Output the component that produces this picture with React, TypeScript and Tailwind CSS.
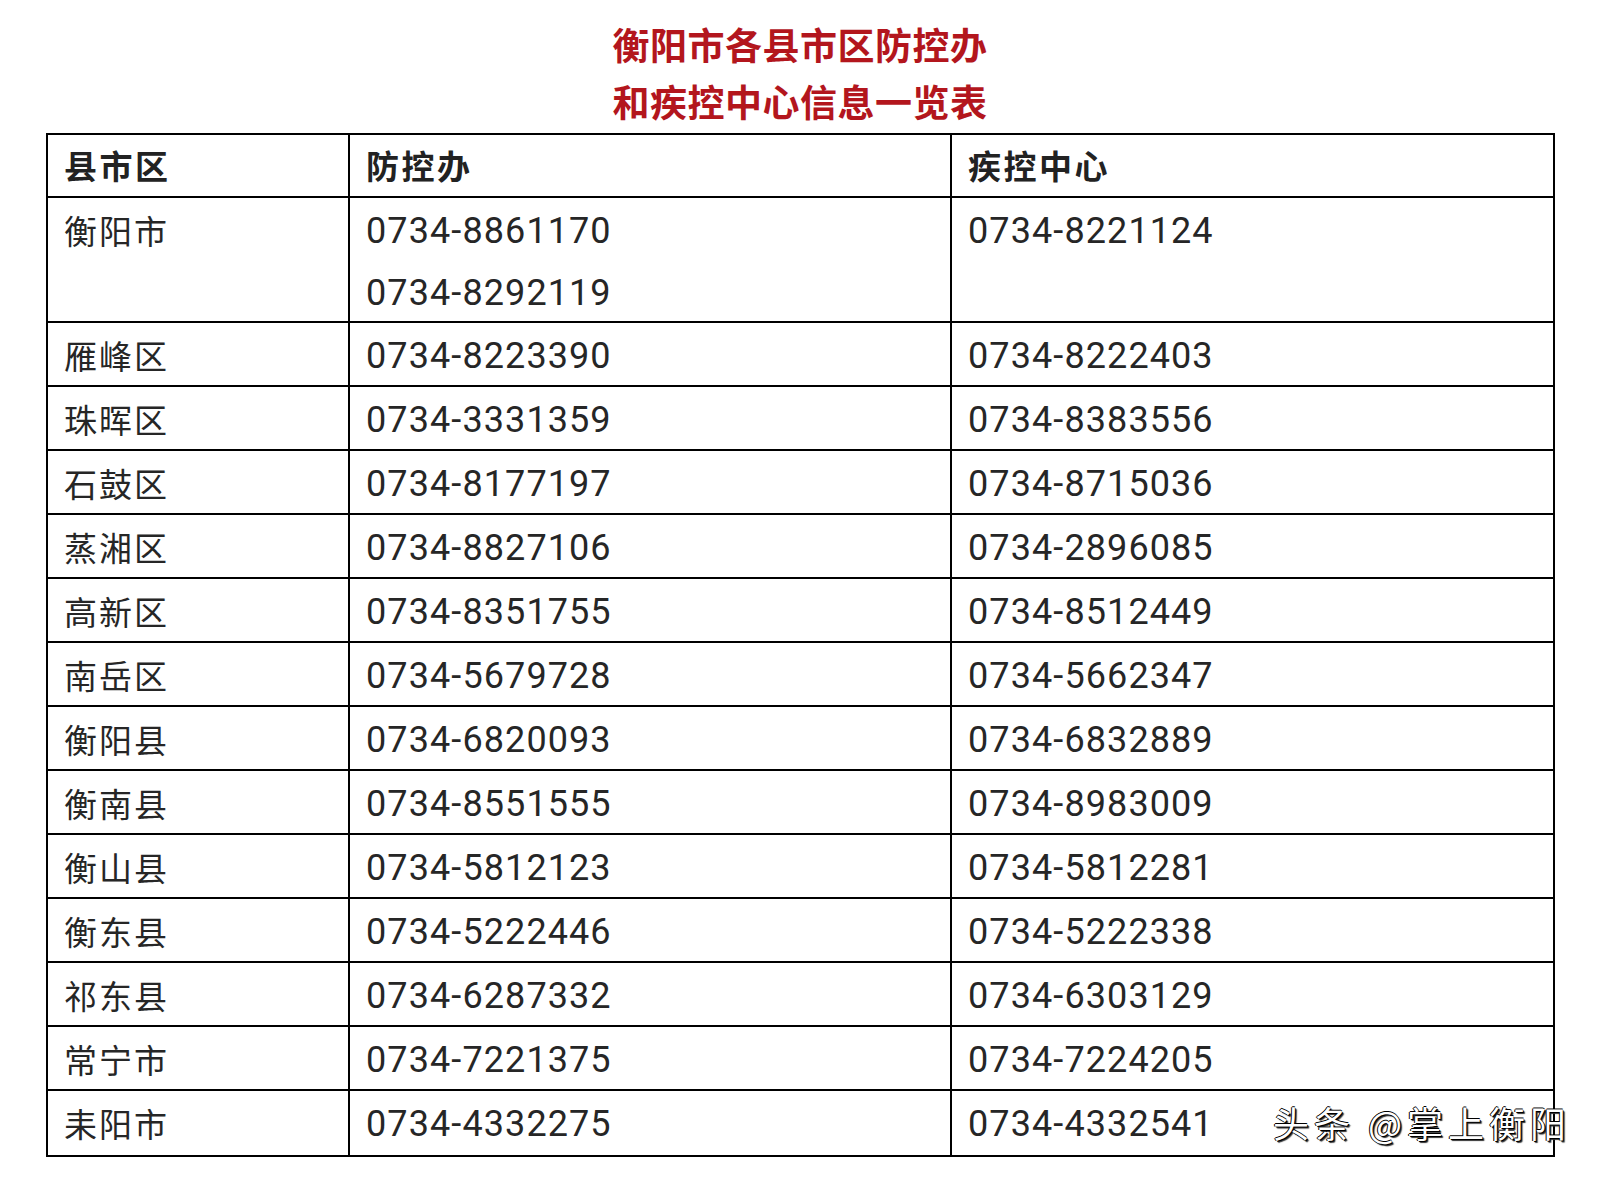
const rows: [string, string[], string][] = [
  ["衡阳市", ["0734-8861170", "0734-8292119"], "0734-8221124"],
  ["雁峰区", ["0734-8223390"], "0734-8222403"],
  ["珠晖区", ["0734-3331359"], "0734-8383556"],
  ["石鼓区", ["0734-8177197"], "0734-8715036"],
  ["蒸湘区", ["0734-8827106"], "0734-2896085"],
  ["高新区", ["0734-8351755"], "0734-8512449"],
  ["南岳区", ["0734-5679728"], "0734-5662347"],
  ["衡阳县", ["0734-6820093"], "0734-6832889"],
  ["衡南县", ["0734-8551555"], "0734-8983009"],
  ["衡山县", ["0734-5812123"], "0734-5812281"],
  ["衡东县", ["0734-5222446"], "0734-5222338"],
  ["祁东县", ["0734-6287332"], "0734-6303129"],
  ["常宁市", ["0734-7221375"], "0734-7224205"],
  ["耒阳市", ["0734-4332275"], "0734-4332541"],
];

const cjk = "font-['Noto_Sans_CJK_SC',sans-serif]";
const num = "pt-[2px] font-['Roboto','Noto_Sans_CJK_SC',sans-serif] text-[36px] tracking-[1.1px] leading-[62px] text-[#262626]";
const head = `pl-4 flex items-center text-[33px] font-bold tracking-[2.5px] text-[#222] ${cjk}`;

export default function App() {
  return (
    <div className="relative w-[1600px] h-[1178px] bg-white overflow-hidden">
      {/* title */}
      <div className={`pt-[16px] text-center text-[37px] leading-[57px] tracking-[0.5px] font-bold text-[#b3161d] ${cjk}`}>
        <div>衡阳市各县市区防控办</div>
        <div>和疾控中心信息一览表</div>
      </div>

      {/* table */}
      <div className="mt-[3px] ml-[46px] w-[1509px] border-2 border-black">
        <div className="flex h-[63px] border-b-2 border-black">
          <div className={`w-[302px] border-r-2 border-black ${head}`}>县市区</div>
          <div className={`w-[602px] border-r-2 border-black ${head}`}>防控办</div>
          <div className={`flex-1 ${head}`}>疾控中心</div>
        </div>
        {rows.map(([name, fk, jk], i) => (
          <div
            key={name}
            className={`flex ${i === rows.length - 1 ? "h-[62px]" : "border-b-2 border-black"} ${i === 0 ? "h-[125px]" : "h-[64px]"}`}
          >
            <div className={`w-[302px] border-r-2 border-black pl-4 pt-[1px] text-[33px] leading-[62px] tracking-[2px] text-[#262626] ${cjk}`}>{name}</div>
            <div className={`w-[602px] border-r-2 border-black pl-4 ${num}`}>
              {fk.map((p) => (
                <div key={p}>{p}</div>
              ))}
            </div>
            <div className={`flex-1 pl-4 ${num}`}>{jk}</div>
          </div>
        ))}
      </div>

      {/* watermark */}
      <div
        className={`absolute left-[1273px] top-[1104px] text-[36px] leading-none tracking-[5px] text-white whitespace-nowrap ${cjk} [text-shadow:1px_1px_0_#000,-1px_0_0_#000,0_-1px_0_#000,2px_2px_1px_#333]`}
      >
        头条 @掌上衡阳
      </div>
    </div>
  );
}
